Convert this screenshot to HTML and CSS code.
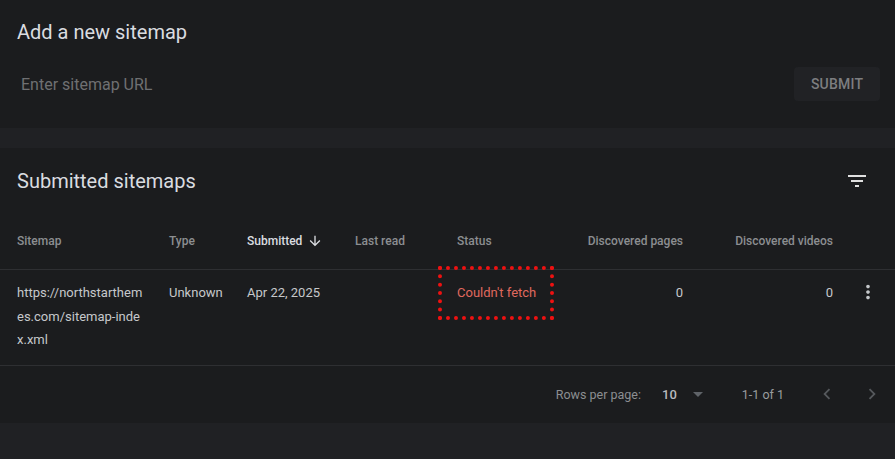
FILE: index.html
```html
<!DOCTYPE html>
<html>
<head>
<meta charset="utf-8">
<link rel="stylesheet" href="styles.css">
</head>
<body>
<div class="page">
  <section class="card add-card">
    <h2 class="card-title">Add a new sitemap</h2>
    <div class="add-row">
      <div class="url-input">Enter sitemap URL</div>
      <button class="submit-btn">SUBMIT</button>
    </div>
  </section>

  <section class="card list-card">
    <div class="list-head">
      <h2 class="card-title">Submitted sitemaps</h2>
      <svg class="filter-icon" viewBox="0 0 24 24" width="24" height="24"><path d="M10 18h4v-2h-4v2zM3 6v2h18V6H3zm3 7h12v-2H6v2z" fill="#e0e0e0"/></svg>
    </div>
    <div class="grid-row header-row">
      <div class="cell">Sitemap</div>
      <div class="cell">Type</div>
      <div class="cell sorted">Submitted <svg class="sort-arrow" viewBox="0 0 24 24" width="16" height="16"><path d="M20 12l-1.41-1.41L13 16.17V4h-2v12.17l-5.58-5.59L4 12l8 8 8-8z" fill="#dadce0"/></svg></div>
      <div class="cell">Last read</div>
      <div class="cell">Status</div>
      <div class="cell num">Discovered pages</div>
      <div class="cell num">Discovered videos</div>
      <div class="cell"></div>
    </div>
    <div class="grid-row body-row">
      <div class="cell url">https://northstarthemes.com/sitemap-index.xml</div>
      <div class="cell">Unknown</div>
      <div class="cell">Apr 22, 2025</div>
      <div class="cell"></div>
      <div class="cell status"><span class="error">Couldn't fetch</span><span class="highlight"></span></div>
      <div class="cell num">0</div>
      <div class="cell num">0</div>
      <div class="cell kebab">
        <svg viewBox="0 0 24 24" width="22" height="22"><path d="M12 8c1.1 0 2-.9 2-2s-.9-2-2-2-2 .9-2 2 .9 2 2 2zm0 2c-1.1 0-2 .9-2 2s.9 2 2 2 2-.9 2-2-.9-2-2-2zm0 6c-1.1 0-2 .9-2 2s.9 2 2 2 2-.9 2-2-.9-2-2-2z" fill="#c4c7ca"/></svg>
      </div>
    </div>
    <div class="pager">
      <span class="pager-label">Rows per page:</span>
      <span class="pager-size">10</span>
      <svg class="pager-drop" viewBox="0 0 10 5" width="10" height="5"><path d="M0 0l5 5 5-5z" fill="#5f6368"/></svg>
      <span class="pager-range">1-1 of 1</span>
      <svg class="pager-nav" viewBox="0 0 24 24" width="22" height="22"><path d="M15.41 7.41L14 6l-6 6 6 6 1.41-1.41L10.83 12z" fill="#55585c"/></svg>
      <svg class="pager-nav" viewBox="0 0 24 24" width="22" height="22"><path d="M10 6L8.59 7.41 13.17 12l-4.58 4.59L10 18l6-6z" fill="#55585c"/></svg>
    </div>
  </section>
</div>
</body>
</html>
```

FILE: styles.css
```css
html, body {
  margin: 0;
  padding: 0;
  background: #202124;
}
body {
  font-family: Roboto, "Liberation Sans", Arial, sans-serif;
  color: #bdc1c6;
  width: 895px;
  height: 459px;
  overflow: hidden;
}
.page {
  display: flex;
  flex-direction: column;
  gap: 20px;
}
.card {
  background: #1b1c1e;
}
.card-title {
  margin: 0;
  font-size: 20px;
  font-weight: 400;
  line-height: 24px;
  color: #dadce0;
}
.add-card {
  height: 128px;
  box-sizing: border-box;
  padding: 20px 15px 0 17px;
}
.add-row {
  margin-top: 23px;
  display: flex;
  align-items: center;
  height: 34px;
}
.url-input {
  flex: 1;
  padding-left: 4px;
  font-size: 16px;
  color: #6f7072;
}
.submit-btn {
  width: 86px;
  height: 34px;
  border: none;
  border-radius: 4px;
  background: #212225;
  color: #7d7e80;
  font-family: Roboto, "Liberation Sans", Arial, sans-serif;
  font-size: 14px;
  font-weight: 500;
  letter-spacing: 0.2px;
  padding: 0;
}
.list-card {
  height: 275px;
  box-sizing: border-box;
}
.list-head {
  display: flex;
  justify-content: space-between;
  align-items: center;
  padding: 21px 26px 23px 17px;
}
.filter-icon {
  display: block;
}
.grid-row {
  display: grid;
  grid-template-columns: 17px 152px 78px 108px 102px 110px 116px 150px 1fr;
  border-bottom: 1px solid #2e2f32;
}
.grid-row::before {
  content: "";
}
.header-row {
  font-size: 12px;
  font-weight: 500;
  line-height: 16px;
  color: #8c8e91;
  padding: 17px 0 20px;
}
.header-row .sorted {
  color: #dadce0;
  display: flex;
  align-items: center;
  gap: 5px;
}
.sort-arrow {
  display: block;
}
.body-row {
  font-size: 13px;
  line-height: 23.5px;
  color: #c6c8cb;
  padding: 11px 0 13px;
}
.cell.num {
  text-align: right;
}
.cell.url {
  width: 130px;
  word-break: break-all;
}
.cell.status {
  position: relative;
}
.error {
  color: #e0695e;
}
.highlight {
  position: absolute;
  left: -19px;
  top: -15px;
  width: 108px;
  height: 46px;
  border: 4px dotted #ee1111;
}
.kebab {
  display: flex;
  justify-content: flex-end;
  padding-right: 16px;
}
.kebab svg {
  display: block;
}
.pager {
  display: flex;
  align-items: center;
  justify-content: flex-end;
  height: 57px;
  padding-right: 12px;
  font-size: 12.5px;
  color: #8c8e91;
}
.pager-label {
  margin-right: 21px;
}
.pager-size {
  color: #b8babd;
  font-weight: 500;
  font-size: 13px;
  margin-right: 16px;
}
.pager-drop {
  margin-right: 39px;
}
.pager-range {
  color: #9a9c9f;
  margin-right: 32px;
}
.pager-nav {
  display: block;
}
.pager-nav + .pager-nav {
  margin-left: 23px;
}
```
